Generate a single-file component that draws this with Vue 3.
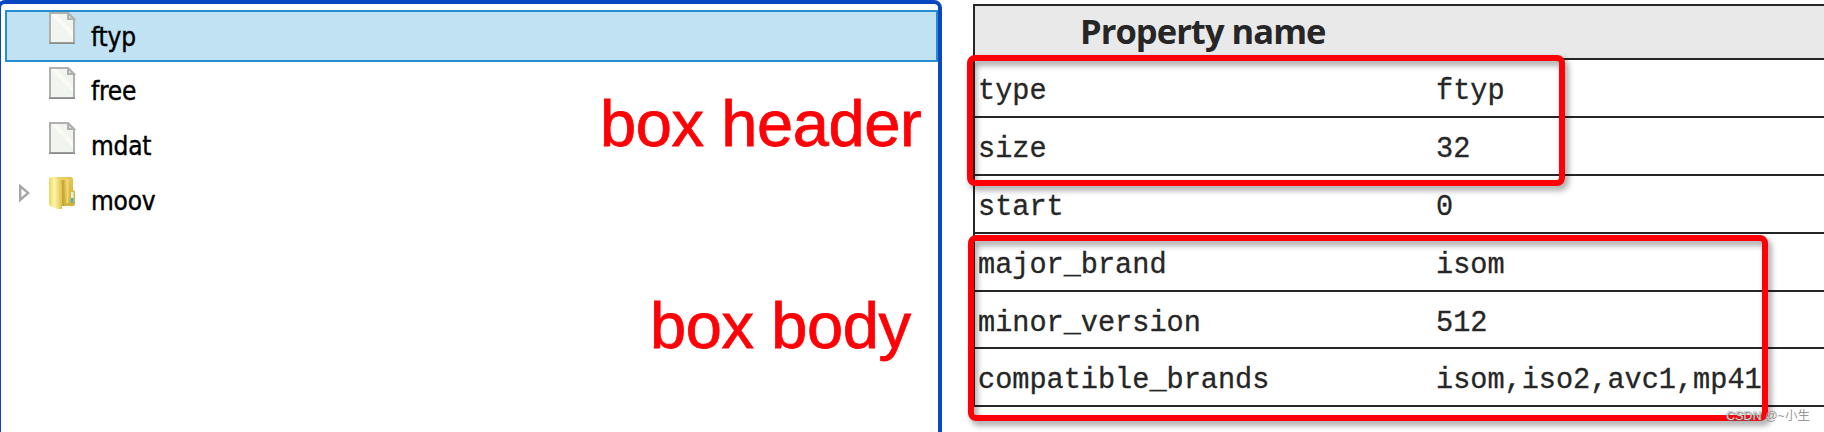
<script setup>
const items = [
  { name: 'ftyp', selected: true },
  { name: 'free' },
  { name: 'mdat' },
  { name: 'moov', folder: true },
]
const properties = [
  ['type', 'ftyp'],
  ['size', '32'],
  ['start', '0'],
  ['major_brand', 'isom'],
  ['minor_version', '512'],
  ['compatible_brands', 'isom,iso2,avc1,mp41'],
]
</script>

<template>
  <main class="page">
    <section class="tree">
      <div v-for="item in items" :key="item.name" class="node" :class="{ selected: item.selected }">
        <span class="toggle">
          <svg v-if="item.folder" width="12" height="20" viewBox="0 0 12 20">
            <path d="M2.2 2.2 L10.2 9 L2.2 15.8 Z" fill="#fff" stroke="#a6a6a6" stroke-width="2.4" />
          </svg>
        </span>
        <svg v-if="item.folder" class="icon" width="28" height="34" viewBox="0 0 28 34">
          <defs>
            <linearGradient id="cover" x1="0" x2="1"><stop stop-color="#ecd366" /><stop offset=".4" stop-color="#fff6a9" /><stop offset="1" stop-color="#dfc34b" /></linearGradient>
            <linearGradient id="back" x1="0" x2="1" y2="1"><stop stop-color="#f0da70" /><stop offset="1" stop-color="#d0ab35" /></linearGradient>
          </defs>
          <path d="M5 0 H22 Q24 0 24 2 V13 Q26 13 26 15 V27 Q26 29 24 29 H12 Z" fill="url(#back)" />
          <path d="M14 3 V29" stroke="#cba638" stroke-width="3" />
          <path d="M18.5 2 V26" stroke="#efd975" stroke-width="2" />
          <path d="M0 3 Q0 0 3 0 Q9 0 12 5 Q13 8 13 12 V32 H9 L1 29 Q0 28 0 27 Z" fill="url(#cover)" />
          <path d="M22 15 h2.6 v11 h-2.6 z" fill="#e8edda" />
          <path d="M22 21 h2.6 v5 h-2.6 z" fill="#57b3b1" />
        </svg>
        <svg v-else class="icon" width="28" height="34" viewBox="0 0 28 34">
          <path d="M1 1 H19 L25 7 V31 H1 Z" fill="#f1f5ef" stroke="#b0b0ae" stroke-width="2" />
          <path d="M2 2 H8 L24 20 V26 Z" fill="#fbfaf4" />
          <path d="M19 1 V7 H25 Z" fill="#dededc" stroke="#b0b0ae" stroke-width="2" />
          <path d="M0 31.2 H26" stroke="#8c8c8a" stroke-width="1.6" />
        </svg>
        <span class="label">{{ item.name }}</span>
      </div>
    </section>

    <section class="details">
      <div class="row head"><span>Property name</span></div>
      <div v-for="[key, value] in properties" :key="key" class="row">
        <span>{{ key }}</span><span>{{ value }}</span>
      </div>
    </section>

    <div class="note header-note">box header</div>
    <div class="note body-note">box body</div>
    <div class="frame header-frame"></div>
    <div class="frame body-frame"></div>
    <div class="watermark"><span>CSDN</span> @~小生</div>
  </main>
</template>

<style>
body { margin: 0; background: #fff; }
</style>

<style scoped>
.page {
  position: relative;
  display: flex;
  gap: 31px;
  width: 1824px;
  height: 432px;
  overflow: hidden;
  background: #fff;
}
.tree {
  box-sizing: border-box;
  flex: none;
  width: 945px;
  height: 460px;
  margin-left: -3px;
  padding: 6px 0 0 4px;
  border: 4px solid #0a47c2;
  border-radius: 8px;
}
.node {
  box-sizing: border-box;
  display: flex;
  align-items: flex-start;
  width: 933px;
  height: 52px;
  margin-bottom: 3px;
  border: 2px solid transparent;
}
.node.selected { border-color: #258dd1; background: #c0e2f3; }
.node.selected .label { padding-top: 8px; }
.toggle { width: 42px; height: 20px; padding: 7px 0 0 11px; box-sizing: border-box; flex: none; }
.toggle svg { display: block; }
.icon { flex: none; }
.label {
  margin-left: 14px;
  font: 26px/34px "DejaVu Sans Condensed", "DejaVu Sans", sans-serif;
  font-stretch: condensed;
  letter-spacing: -0.2px;
  color: #000;
  -webkit-text-stroke: 0.4px #000;
  padding-top: 7px;
}
.details {
  flex: none;
  width: 900px;
  height: 401px;
  margin-top: 4px;
  border-top: 2px solid #262626;
  border-left: 2px solid #262626;
}
.row {
  box-sizing: border-box;
  display: grid;
  grid-template-columns: 458px 1fr;
  height: 58px;
  padding-left: 3px;
  border-bottom: 2px solid #262626;
  font: 28.57px/63px "Courier", "Liberation Mono", monospace;
  color: #262626;
  -webkit-text-stroke: 0.3px #262626;
  white-space: pre;
}
.row:nth-child(6) { height: 57px; }
.row.head {
  height: 54px;
  background: #e9e9e9;
  font: bold 34.5px/50px "Open Sans", sans-serif;
  letter-spacing: -0.95px;
  -webkit-text-stroke: 0;
}
.row.head span { padding-left: 102px; }
.note {
  position: absolute;
  font: 65px/76px "Liberation Sans", Arial, sans-serif;
  letter-spacing: -0.4px;
  color: #ff0006;
  -webkit-text-stroke: 0.8px #ff0006;
  white-space: nowrap;
}
.header-note { left: 600px; top: 86px; }
.body-note { left: 650px; top: 288px; }
.frame {
  position: absolute;
  box-sizing: border-box;
  border: 6px solid #ff0006;
  border-radius: 8px;
  filter: drop-shadow(3px 4px 3px rgba(0, 0, 0, 0.4));
}
.header-frame { left: 967px; top: 55px; width: 598px; height: 131px; }
.body-frame { left: 968px; top: 235px; width: 800px; height: 186px; }
.watermark {
  position: absolute;
  left: 1726px;
  top: 407px;
  font: 12.5px/18px "Liberation Sans", "Noto Sans CJK SC", sans-serif;
  color: #9a9a9a;
  white-space: nowrap;
}
.watermark span { color: rgba(255, 255, 255, 0.7); text-shadow: 1px 1px 1px #666, 0 0 1px #777; }
</style>
